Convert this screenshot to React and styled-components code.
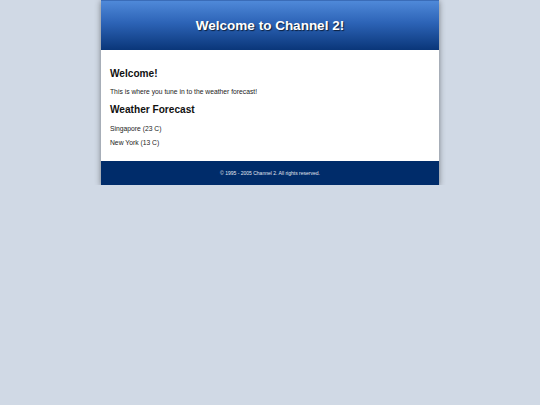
import React from "react";
import styled, { createGlobalStyle } from "styled-components";

const Global = createGlobalStyle`
  html, body { margin: 0; padding: 0; }
  body {
    background: #d0d9e5;
    font-family: "Liberation Sans", Arial, sans-serif;
    font-size: 6.75px;
    color: #1a1a1a;
  }
`;

const Page = styled.div`
  width: 338px;
  margin: 0 auto;
  background: #ffffff;
  box-shadow: 0 1px 6px rgba(0, 0, 0, 0.45);
`;

const Header = styled.header`
  height: 50px;
  display: flex;
  align-items: center;
  justify-content: center;
  background: linear-gradient(to bottom, #4f89d9 0%, #2c63b6 45%, #0a3679 100%);
  border-top: 1px solid #3a6cb8;
  box-sizing: border-box;
`;

const Title = styled.h1`
  margin: 0;
  font-size: 13.5px;
  line-height: 16px;
  font-weight: bold;
  color: #ffffff;
  text-shadow: 1px 1px 1px rgba(0, 0, 0, 0.65);
`;

const Content = styled.main`
  padding: 8.5px 9px 7px;
  display: flow-root;
  border-top: 1px solid #ffffff;
`;

const Heading = styled.h2`
  font-size: 10.125px;
  line-height: 12px;
  font-weight: bold;
  margin: 8.3px 0;
  color: #111;
`;

const Para = styled.p`
  margin: 6.6px 0;
  line-height: 8px;
  color: #222;
`;

const Footer = styled.footer`
  background: #002c6a;
  height: 24.5px;
  display: flex;
  align-items: center;
  justify-content: center;
  color: #e4e8f0;
  font-size: 5px;
`;

export default function App() {
  const cities = [
    { name: "Singapore", temp: 23 },
    { name: "New York", temp: 13 },
  ];
  return (
    <>
      <Global />
      <Page>
        <Header>
          <Title>Welcome to Channel 2!</Title>
        </Header>
        <Content>
          <Heading>Welcome!</Heading>
          <Para>This is where you tune in to the weather forecast!</Para>
          <Heading>Weather Forecast</Heading>
          {cities.map((c) => (
            <Para key={c.name}>
              {c.name} ({c.temp} C)
            </Para>
          ))}
        </Content>
        <Footer>© 1995 - 2005 Channel 2. All rights reserved.</Footer>
      </Page>
    </>
  );
}
